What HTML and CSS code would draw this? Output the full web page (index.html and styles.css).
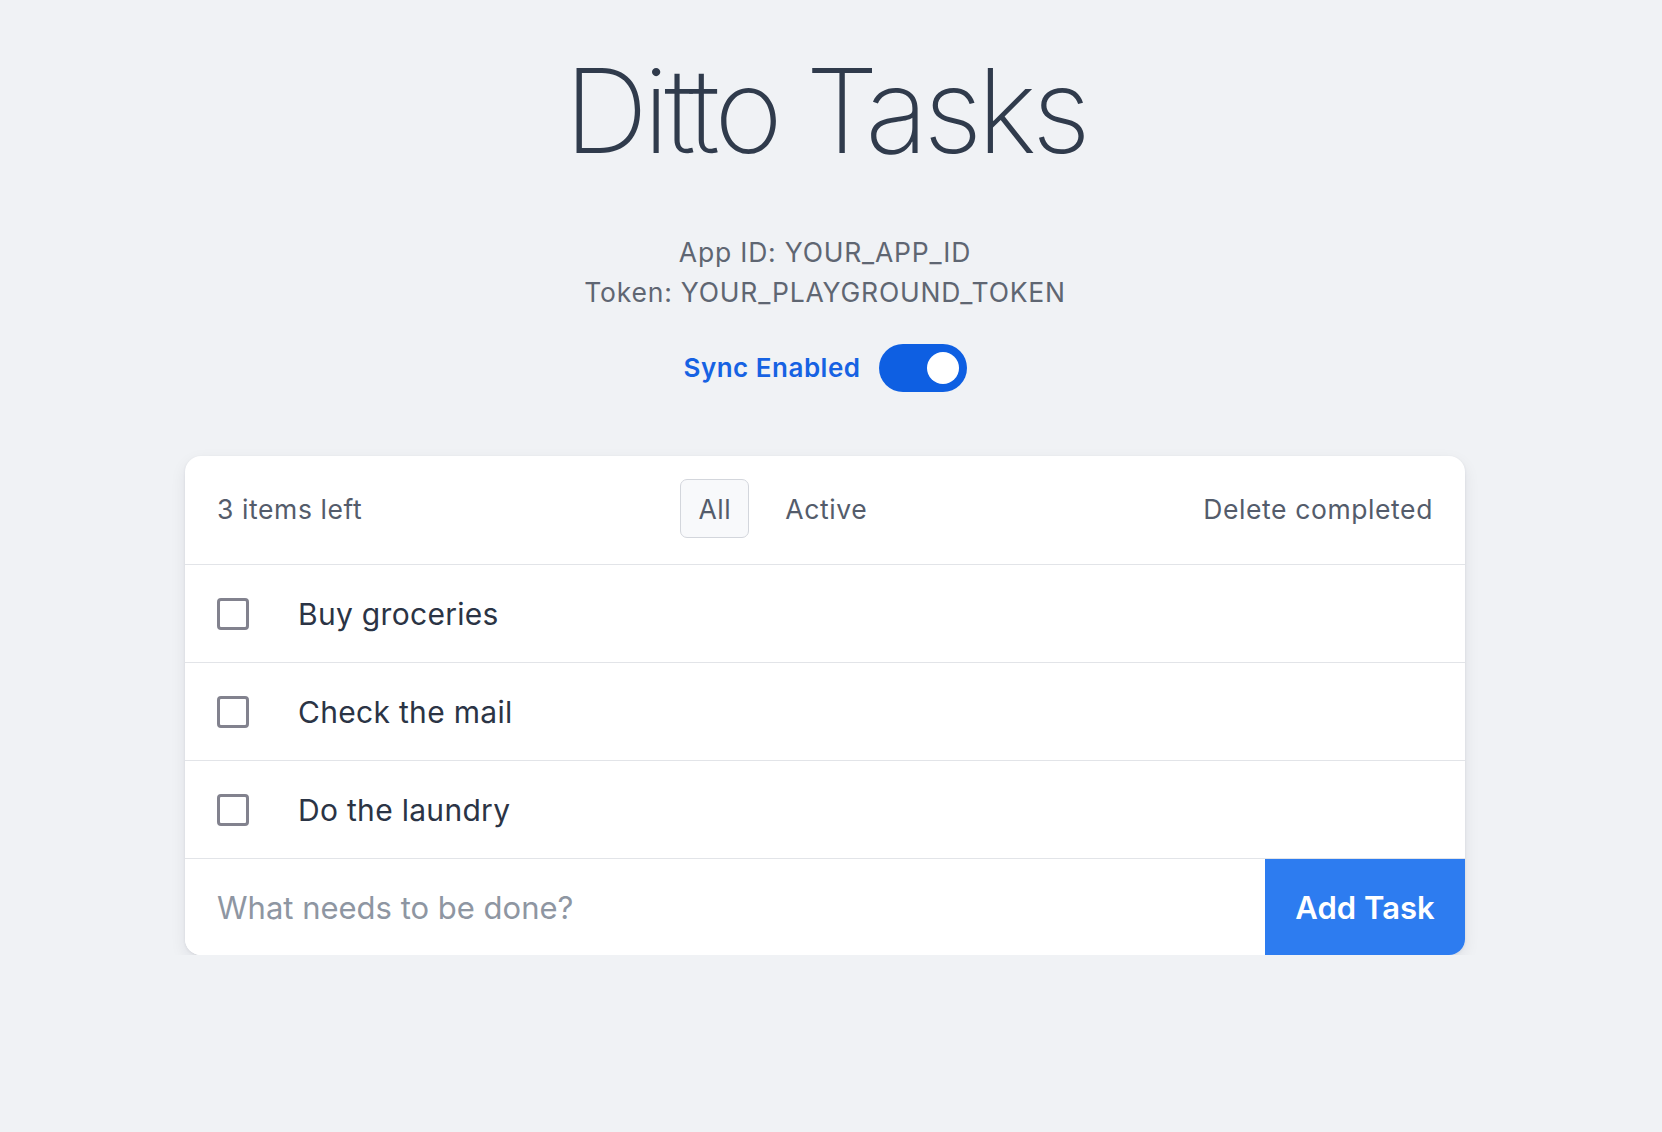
FILE: index.html
```html
<!DOCTYPE html>
<html lang="en">
<head>
<meta charset="utf-8">
<title>Ditto Tasks</title>
<link rel="stylesheet" href="styles.css">
</head>
<body>
<main class="page">
  <h1 class="title">Ditto Tasks</h1>
  <div class="info">
    <div>App ID: YOUR_APP_ID</div>
    <div>Token: YOUR_PLAYGROUND_TOKEN</div>
  </div>
  <div class="sync">
    <span class="sync-label">Sync Enabled</span>
    <span class="toggle"><span class="knob"></span></span>
  </div>
  <section class="card">
    <div class="card-header">
      <span class="count">3 items left</span>
      <div class="filters">
        <button class="filter active">All</button>
        <button class="filter">Active</button>
      </div>
      <button class="delete">Delete completed</button>
    </div>
    <ul class="tasks">
      <li class="task"><span class="check"></span><span class="task-text">Buy groceries</span></li>
      <li class="task"><span class="check"></span><span class="task-text">Check the mail</span></li>
      <li class="task"><span class="check"></span><span class="task-text">Do the laundry</span></li>
    </ul>
    <form class="new-task">
      <input class="new-input" type="text" placeholder="What needs to be done?">
      <button class="add" type="button">Add Task</button>
    </form>
  </section>
</main>
</body>
</html>
```
FILE: styles.css
```css
* { box-sizing: border-box; }
html, body { margin: 0; padding: 0; }
body {
  background: #f0f2f5;
  font-family: Inter, "Noto Sans", sans-serif;
  color: #2b3445;
  padding-right: 12px;
}
.page {
  width: 1280px;
  margin: 0 auto;
  display: flex;
  flex-direction: column;
  align-items: center;
  padding-top: 52px;
}
.title {
  margin: 0;
  font-size: 117px;
  line-height: 1;
  font-weight: 200;
  color: #303b4c;
  letter-spacing: -5px;
}
.info {
  margin-top: 63px;
  font-size: 26.5px;
  line-height: 40px;
  color: #5f6672;
  text-align: center;
  letter-spacing: 0.8px;
}
.sync {
  margin-top: 32px;
  display: flex;
  align-items: center;
  gap: 18px;
  height: 48px;
}
.sync-label {
  font-size: 26px;
  line-height: 40px;
  font-weight: 600;
  color: #1662e3;
  letter-spacing: 0.5px;
}
.toggle {
  width: 88px;
  height: 48px;
  border-radius: 24px;
  background: #0e5fe2;
  display: flex;
  align-items: center;
  justify-content: flex-end;
  padding: 0 8px;
}
.knob {
  width: 32px;
  height: 32px;
  border-radius: 50%;
  background: #fff;
}
.card {
  margin-top: 64px;
  width: 1280px;
  background: #fff;
  border-radius: 16px;
  box-shadow: 0 6px 16px rgba(20, 30, 50, 0.08), 0 1px 3px rgba(20, 30, 50, 0.08);
  overflow: hidden;
}
.card-header {
  display: flex;
  align-items: center;
  justify-content: space-between;
  padding: 23px 32px 26px;
  border-bottom: 1px solid #e2e4e8;
  font-size: 26.5px;
  letter-spacing: 0.6px;
  color: #545c6b;
}
.filters {
  display: flex;
  gap: 18px;
}
button {
  font-family: inherit;
  font-size: inherit;
  color: inherit;
  letter-spacing: inherit;
  background: none;
  border: none;
  cursor: pointer;
}
.filter {
  height: 59px;
  padding: 0 17px;
  border: 1px solid transparent;
  border-radius: 7px;
}
.filter.active {
  border-color: #d3d6dc;
  background: #f8f9fb;
}
.delete { padding: 0; }
.tasks {
  list-style: none;
  margin: 0;
  padding: 0;
}
.task {
  height: 98px;
  display: flex;
  align-items: center;
  padding: 0 32px;
  border-bottom: 1px solid #e2e4e8;
}
.check {
  width: 32px;
  height: 32px;
  border: 3px solid #82828e;
  border-radius: 4px;
  flex: none;
}
.task-text {
  margin-left: 49px;
  font-size: 30px;
  letter-spacing: 0.3px;
  color: #2b3445;
}
.new-task {
  display: flex;
  height: 96px;
  margin: 0;
}
.new-input {
  flex: 1;
  border: none;
  outline: none;
  padding: 0 32px;
  font-family: inherit;
  font-size: 31px;
  color: #2b3445;
}
.new-input::placeholder { color: #8e96a2; }
.add {
  width: 200px;
  background: #2d7cf0;
  color: #fff;
  font-size: 31px;
  font-weight: 600;
}
```
